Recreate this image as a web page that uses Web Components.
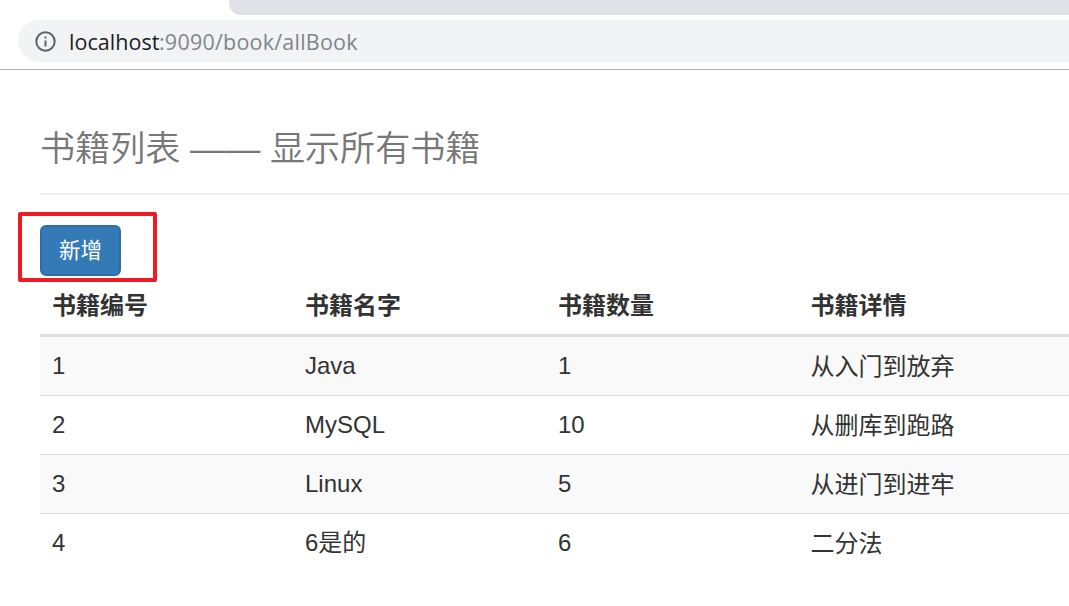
<!DOCTYPE html>
<html lang="zh-CN">
<head>
<meta charset="utf-8">
<title>书籍列表</title>
<style>
html,body{margin:0;background:#fff;overflow:hidden}
body{width:1069px;height:606px;font-family:"Liberation Sans","Noto Sans CJK SC",sans-serif;color:#333}
</style>
</head>
<body>
<browser-bar host="localhost" path=":9090/book/allBook"></browser-bar>
<book-page>
  <page-title slot="title">书籍列表 —— 显示所有书籍</page-title>
  <marked-area slot="action"><primary-button>新增</primary-button></marked-area>
  <book-table></book-table>
</book-page>
<script>
class Base extends HTMLElement{
  connectedCallback(){
    if(this.shadowRoot)return;
    this.attachShadow({mode:'open'}).innerHTML=this.view();
  }
}
customElements.define('browser-bar',class extends Base{
  view(){return `<style>
  :host{display:flex;flex-direction:column;height:70px;box-sizing:border-box;border-bottom:1px solid #b1b3b5;overflow:hidden}
  .tabs{height:15px;margin-left:229px;background:#dee1e6;border-bottom-left-radius:12px;flex:none}
  .url{display:flex;align-items:center;height:42px;margin:5px 0 0 18px;padding-left:17px;background:#f1f3f4;border-radius:21px 0 0 21px;font:21.5px/44px "Open Sans","Noto Sans",sans-serif;color:#80868b;white-space:nowrap}
  svg{margin-right:13px;flex:none}
  span{padding-top:1px}
  .host{color:#202124;width:90px;letter-spacing:.05px}
  .path{letter-spacing:.22px}
  </style>
  <div class="tabs"></div>
  <div class="url"><svg width="21" height="21" viewBox="0 0 21 21"><circle cx="10.5" cy="10.5" r="9.2" fill="none" stroke="#5f6368" stroke-width="2"/><path d="M9.5 9.4h2v6h-2zM9.5 5.6h2v2h-2z" fill="#5f6368"/></svg><span class="host">${this.getAttribute('host')}</span><span class="path">${this.getAttribute('path')}</span></div>`}
});
customElements.define('book-page',class extends Base{
  view(){return `<style>
  :host{display:flex;flex-direction:column;padding:46px 0 0 40px}
  </style><slot name="title"></slot><slot name="action"></slot><slot></slot>`}
});
customElements.define('page-title',class extends Base{
  view(){return `<style>
  :host{display:block;height:77px;border-bottom:2px solid #eee}
  h1{margin:0;font-size:35.1px;line-height:66px;font-weight:350;color:#777;white-space:nowrap;font-family:"Liberation Sans","Noto Sans CJK SC",sans-serif}
  </style><h1><slot></slot></h1>`}
});
customElements.define('marked-area',class extends Base{
  view(){return `<style>
  :host{display:flex;position:relative;align-self:flex-start;margin-top:30px}
  i{position:absolute;left:-22px;top:-13px;width:139px;height:70px;box-sizing:border-box;border:4px solid #ed1c24;border-radius:2px;pointer-events:none}
  </style><slot></slot><i></i>`}
});
customElements.define('primary-button',class extends Base{
  view(){return `<style>
  :host{display:block}
  button{display:block;width:81px;height:51px;box-sizing:border-box;padding:2px 0 0;border:2px solid #2e6da4;border-radius:6px;background:#337ab7;color:#fff;font:21.5px/45px "Liberation Sans","Noto Sans CJK SC",sans-serif}
  </style><button><slot></slot></button>`}
});
customElements.define('book-table',class extends Base{
  view(){
    const rows=[['1','Java','1','从入门到放弃'],['2','MySQL','10','从删库到跑路'],['3','Linux','5','从进门到进牢'],['4','6是的','6','二分法']];
    return `<style>
  :host{display:block;font-size:24px}
  .row{display:grid;grid-template-columns:repeat(3,253px) 1fr;height:59px;box-sizing:border-box;padding-left:12px;line-height:58px;border-bottom:1px solid #ddd;white-space:nowrap}
  .head{height:61px;line-height:60px;font-weight:700;border-bottom:3px solid #ddd}
  .row span:last-child{line-height:60px;margin-left:-.5px}
  .odd{background:#f9f9f9}
  .row:last-child{border:0}
  </style>
  <div class="row head">${['书籍编号','书籍名字','书籍数量','书籍详情'].map(t=>`<span>${t}</span>`).join('')}</div>
  ${rows.map((r,i)=>`<div class="row${i%2?'':' odd'}">${r.map(t=>`<span>${t}</span>`).join('')}</div>`).join('')}`}
});
</script>
</body>
</html>
